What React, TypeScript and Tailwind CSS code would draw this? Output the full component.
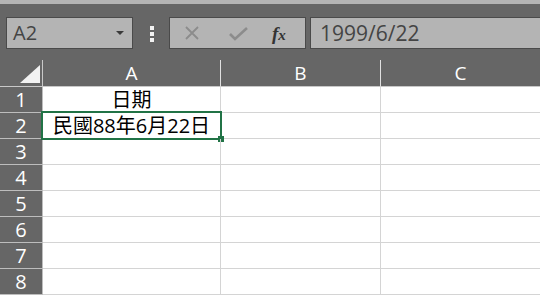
import React from "react";

const font = { fontFamily: '"Open Sans", "Noto Sans CJK TC", sans-serif' };

const rows: [string, string][] = [
  ["1", "日期"],
  ["2", "民國88年6月22日"],
  ["3", ""],
  ["4", ""],
  ["5", ""],
  ["6", ""],
  ["7", ""],
  ["8", ""],
];

function TopBar() {
  return (
    <div className="h-[60px] bg-[#666666] border-t-[4px] border-[#b4b4b4] pt-[13px] flex items-start">
      <div className="ml-[6px] w-[127px] h-[32px] bg-[#b4b4b4] border border-[#4a4a4a] flex items-center justify-between pl-[6px] pr-[8px]">
        <span className="text-[20px] text-[#444] leading-none">A2</span>
        <svg width="8" height="5" viewBox="0 0 8 5">
          <path d="M0 0h8L4 4z" fill="#3a3a3a" />
        </svg>
      </div>
      <div className="ml-[17px] mt-[9px] flex flex-col gap-[2px]">
        <div className="w-[4px] h-[4px] bg-[#f2f2f2]" />
        <div className="w-[4px] h-[4px] bg-[#f2f2f2]" />
        <div className="w-[4px] h-[4px] bg-[#f2f2f2]" />
      </div>
      <div className="ml-[15px] w-[137px] h-[32px] bg-[#b4b4b4] border border-[#4a4a4a] flex items-center">
        <svg className="ml-[14px]" width="16" height="16" viewBox="0 0 16 16">
          <path d="M2 2L14 14M14 2L2 14" stroke="#8c8c8c" strokeWidth="1.8" />
        </svg>
        <svg className="ml-[29px]" width="19" height="15" viewBox="0 0 19 15">
          <path d="M1 8L6 13L18 2" stroke="#8c8c8c" strokeWidth="2.6" fill="none" />
        </svg>
        <span
          className="ml-[24px] text-[19px] text-[#333] italic font-bold leading-none"
          style={{ fontFamily: '"Liberation Serif", serif' }}
        >
          f<span className="text-[15px]">x</span>
        </span>
      </div>
      <div className="ml-[4px] flex-1 h-[32px] bg-[#b4b4b4] border border-[#4a4a4a] border-r-0 flex items-center pl-[9px]">
        <span className="text-[21px] text-[#444] leading-none">1999/6/22</span>
      </div>
    </div>
  );
}

export default function App() {
  return (
    <div className="w-[540px] h-[295px] overflow-hidden bg-white" style={font}>
      <TopBar />
      <div className="grid grid-cols-[43px_178px_160px_1fr]">
        <div className="h-[27px] bg-[#666666] border-r border-b border-[#c8c8c8] flex items-end justify-end pr-[2px] pb-[3px]">
          <svg width="20" height="18" viewBox="0 0 20 18">
            <path d="M0 18L20 0V18z" fill="#f2f2f2" />
          </svg>
        </div>
        {["A", "B", "C"].map((c, i) => (
          <div
            key={c}
            className={
              "h-[27px] bg-[#666666] border-b border-[#c8c8c8] flex items-center justify-center text-white text-[19px] leading-none " +
              (i < 2 ? "border-r border-r-[#e0e0e0]" : "")
            }
          >
            {c}
          </div>
        ))}
        {rows.map(([n, a]) => (
          <React.Fragment key={n}>
            <div className="h-[26px] bg-[#666666] border-r border-b border-[#bdbdbd] flex items-center justify-center text-white text-[20px] leading-none">
              {n}
            </div>
            <div className="relative h-[26px] border-r border-b border-[#d4d4d4] flex items-center justify-center text-[20px] text-black leading-none">
              {a}
              {n === "2" && (
                <>
                  <div className="absolute -top-[2px] -left-[2px] -right-[2px] -bottom-[2px] border-2 border-[#217346]" />
                  <div className="absolute -right-[4px] -bottom-[4px] w-[6px] h-[6px] bg-[#217346]" />
                </>
              )}
            </div>
            <div className="h-[26px] border-r border-b border-[#d4d4d4]" />
            <div className="h-[26px] border-b border-[#d4d4d4]" />
          </React.Fragment>
        ))}
      </div>
    </div>
  );
}
